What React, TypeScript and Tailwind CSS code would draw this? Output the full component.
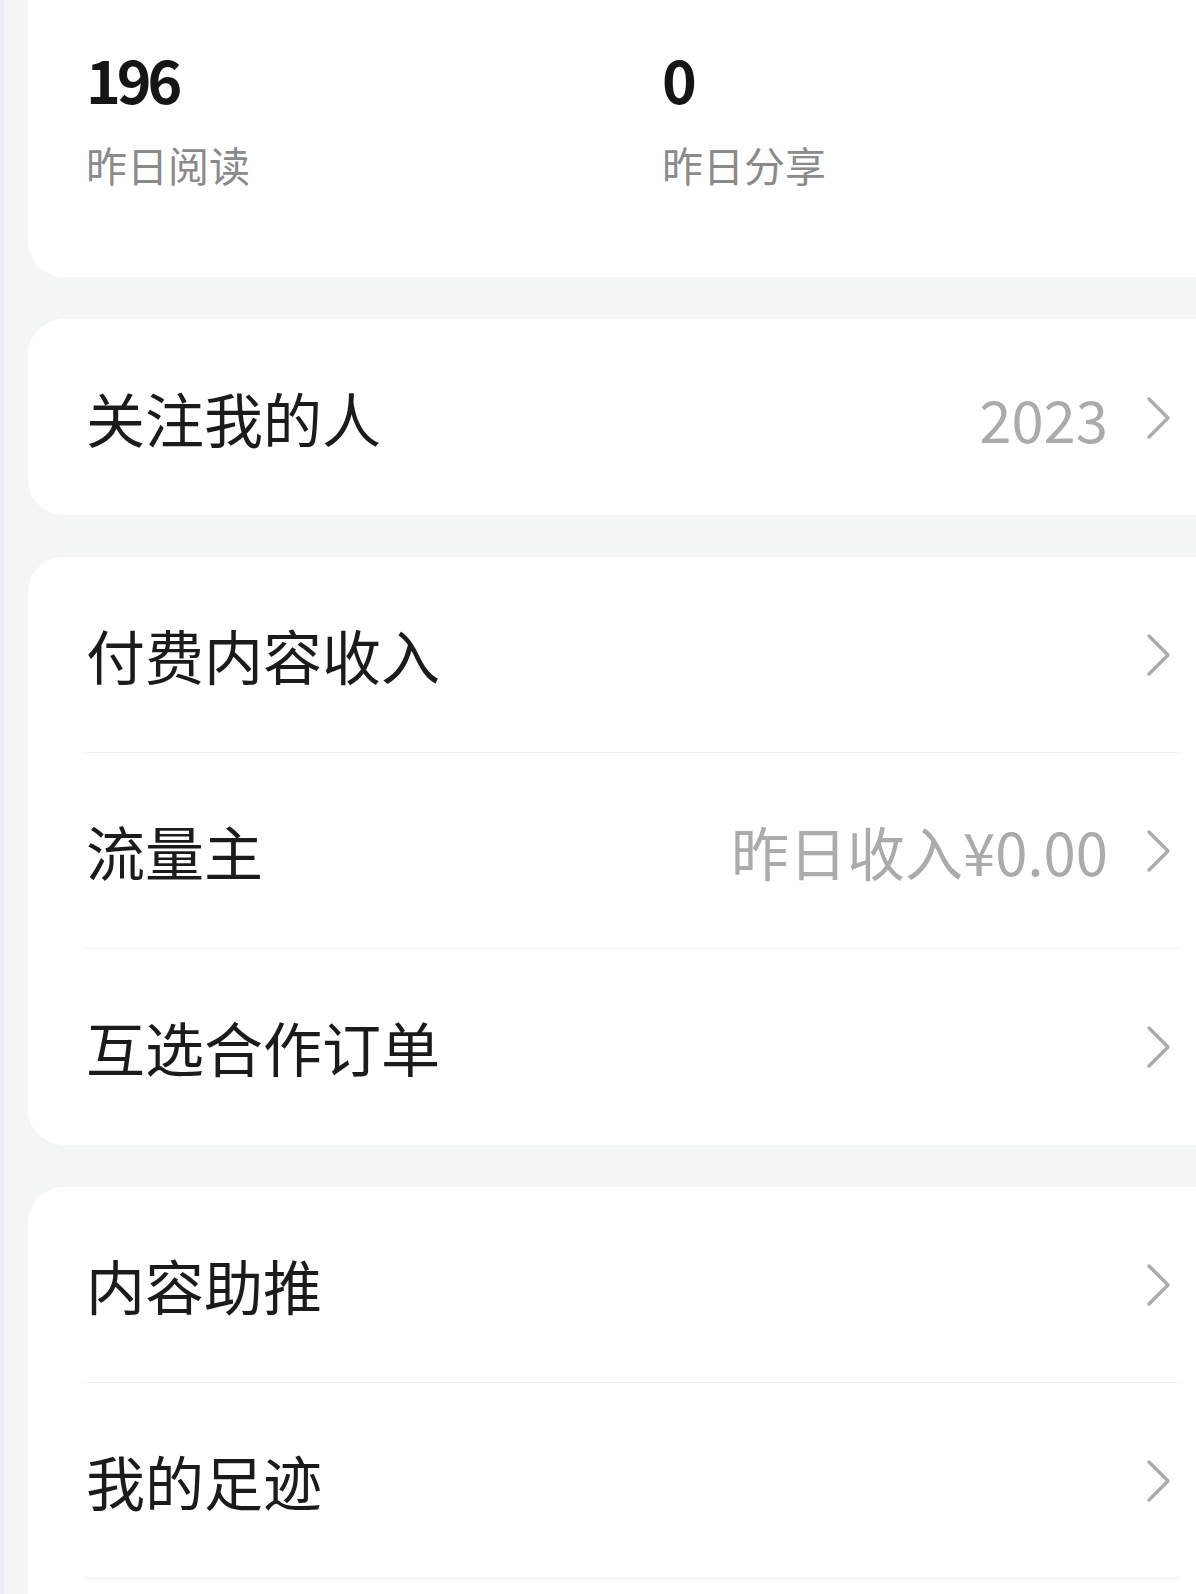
import React from "react";

const font = { fontFamily: '"Noto Sans CJK SC", "Noto Sans", sans-serif' };

function Chevron() {
  return (
    <svg width="26" height="44" viewBox="0 0 26 44" className="shrink-0">
      <polyline
        points="3,3 22,22 3,41"
        fill="none"
        stroke="#ababab"
        strokeWidth="3.4"
        strokeLinecap="round"
        strokeLinejoin="round"
      />
    </svg>
  );
}

function Row({ title, value, divider }: { title: string; value?: string; divider?: boolean }) {
  return (
    <div className="flex flex-col">
      <div className="flex h-[195px] items-center pl-[58px] pr-[24px]">
        <span className="flex-1 text-[59px] leading-none text-[#1b1b1b]">{title}</span>
        {value && <span className="mr-[38px] text-[58px] leading-none text-[#ababab]">{value}</span>}
        <Chevron />
      </div>
      {divider && <div className="ml-[57px] mr-[16px] h-px bg-[#efefef]" />}
    </div>
  );
}

function Stat({ num, label }: { num: string; label: string }) {
  return (
    <div className="flex flex-col">
      <span className="text-[59px] font-bold leading-[60px] tracking-[-4px] text-[#151515]">{num}</span>
      <span className="mt-[35px] text-[41px] leading-[41px] text-[#8a8a8a]">{label}</span>
    </div>
  );
}

export default function App() {
  return (
    <div
      className="flex h-[1594px] w-[1196px] flex-col gap-[42px] overflow-hidden border-l-[4px] border-[#e9eff2] bg-[#f4f6f6] pl-[24px]"
      style={font}
    >
      <div className="grid h-[277px] shrink-0 grid-cols-[576px_1fr] rounded-bl-[36px] bg-white pl-[58px] pt-[49px]">
        <Stat num="196" label="昨日阅读" />
        <Stat num="0" label="昨日分享" />
      </div>

      <div className="shrink-0 rounded-l-[36px] bg-white pt-px">
        <Row title="关注我的人" value="2023" />
      </div>

      <div className="shrink-0 rounded-l-[36px] bg-white pb-px">
        <Row title="付费内容收入" divider />
        <Row title="流量主" value="昨日收入¥0.00" divider />
        <Row title="互选合作订单" />
      </div>

      <div className="shrink-0 rounded-tl-[36px] bg-white pb-[40px]">
        <Row title="内容助推" divider />
        <Row title="我的足迹" divider />
      </div>
    </div>
  );
}
